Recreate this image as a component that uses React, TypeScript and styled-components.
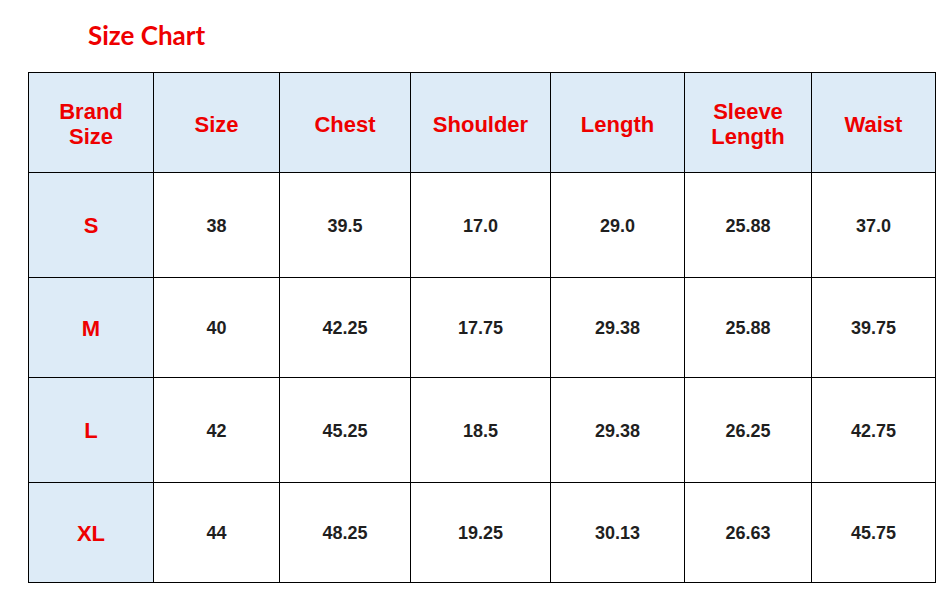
import styled, { createGlobalStyle } from "styled-components";

const GlobalStyle = createGlobalStyle`
	html, body {
		margin: 0;
		padding: 0;
		background: #ffffff;
	}
	body {
		font-family: "Liberation Sans", Arial, sans-serif;
	}
`;

const Page = styled.div`
	display: flex;
	flex-direction: column;
	padding: 20px 0 0 28px;
`;

const Title = styled.h1`
	margin: 0 0 22px 60px;
	font-family: Lato, "Open Sans", sans-serif;
	font-size: 26px;
	font-weight: 700;
	line-height: 30px;
	color: #ee0000;
`;

const Table = styled.table`
	border-collapse: collapse;
	table-layout: fixed;
	width: 907px;
`;

const HeadCell = styled.th`
	height: 96px;
	padding: 3px 4px 0;
	border: 1px solid #000;
	background: #ddebf7;
	color: #ee0000;
	font-size: 22px;
	font-weight: 700;
	line-height: 25px;
	text-align: center;
	vertical-align: middle;
`;

const Row = styled.tr<{ $tall: boolean }>`
	height: ${(p) => (p.$tall ? "105px" : "100px")};
`;

const BrandCell = styled.td`
	padding: 2px 0 0;
	border: 1px solid #000;
	background: #ddebf7;
	color: #ee0000;
	font-size: 22px;
	font-weight: 700;
	text-align: center;
	vertical-align: middle;
`;

const ValueCell = styled.td`
	padding: 2px 0 0;
	border: 1px solid #000;
	background: #fff;
	color: #1f1f1f;
	font-size: 18px;
	font-weight: 700;
	text-align: center;
	vertical-align: middle;
`;

const widths = [125, 126, 131, 140, 134, 127, 124];

const headers = [
	["Brand", "Size"],
	["Size"],
	["Chest"],
	["Shoulder"],
	["Length"],
	["Sleeve", "Length"],
	["Waist"],
];

const rows = [
	["S", "38", "39.5", "17.0", "29.0", "25.88", "37.0"],
	["M", "40", "42.25", "17.75", "29.38", "25.88", "39.75"],
	["L", "42", "45.25", "18.5", "29.38", "26.25", "42.75"],
	["XL", "44", "48.25", "19.25", "30.13", "26.63", "45.75"],
];

function App() {
	return (
		<>
			<GlobalStyle />
			<Page>
				<Title>Size Chart</Title>
				<Table>
					<colgroup>
						{widths.map((w, i) => (
							<col key={i} style={{ width: w }} />
						))}
					</colgroup>
					<thead>
						<tr>
							{headers.map((lines, i) => (
								<HeadCell key={i}>
									{lines.map((l, j) => (
										<div key={j}>{l}</div>
									))}
								</HeadCell>
							))}
						</tr>
					</thead>
					<tbody>
						{rows.map((row, i) => (
							<Row key={row[0]} $tall={i % 2 === 0}>
								<BrandCell>{row[0]}</BrandCell>
								{row.slice(1).map((v, j) => (
									<ValueCell key={j}>{v}</ValueCell>
								))}
							</Row>
						))}
					</tbody>
				</Table>
			</Page>
		</>
	);
}

export default App;
